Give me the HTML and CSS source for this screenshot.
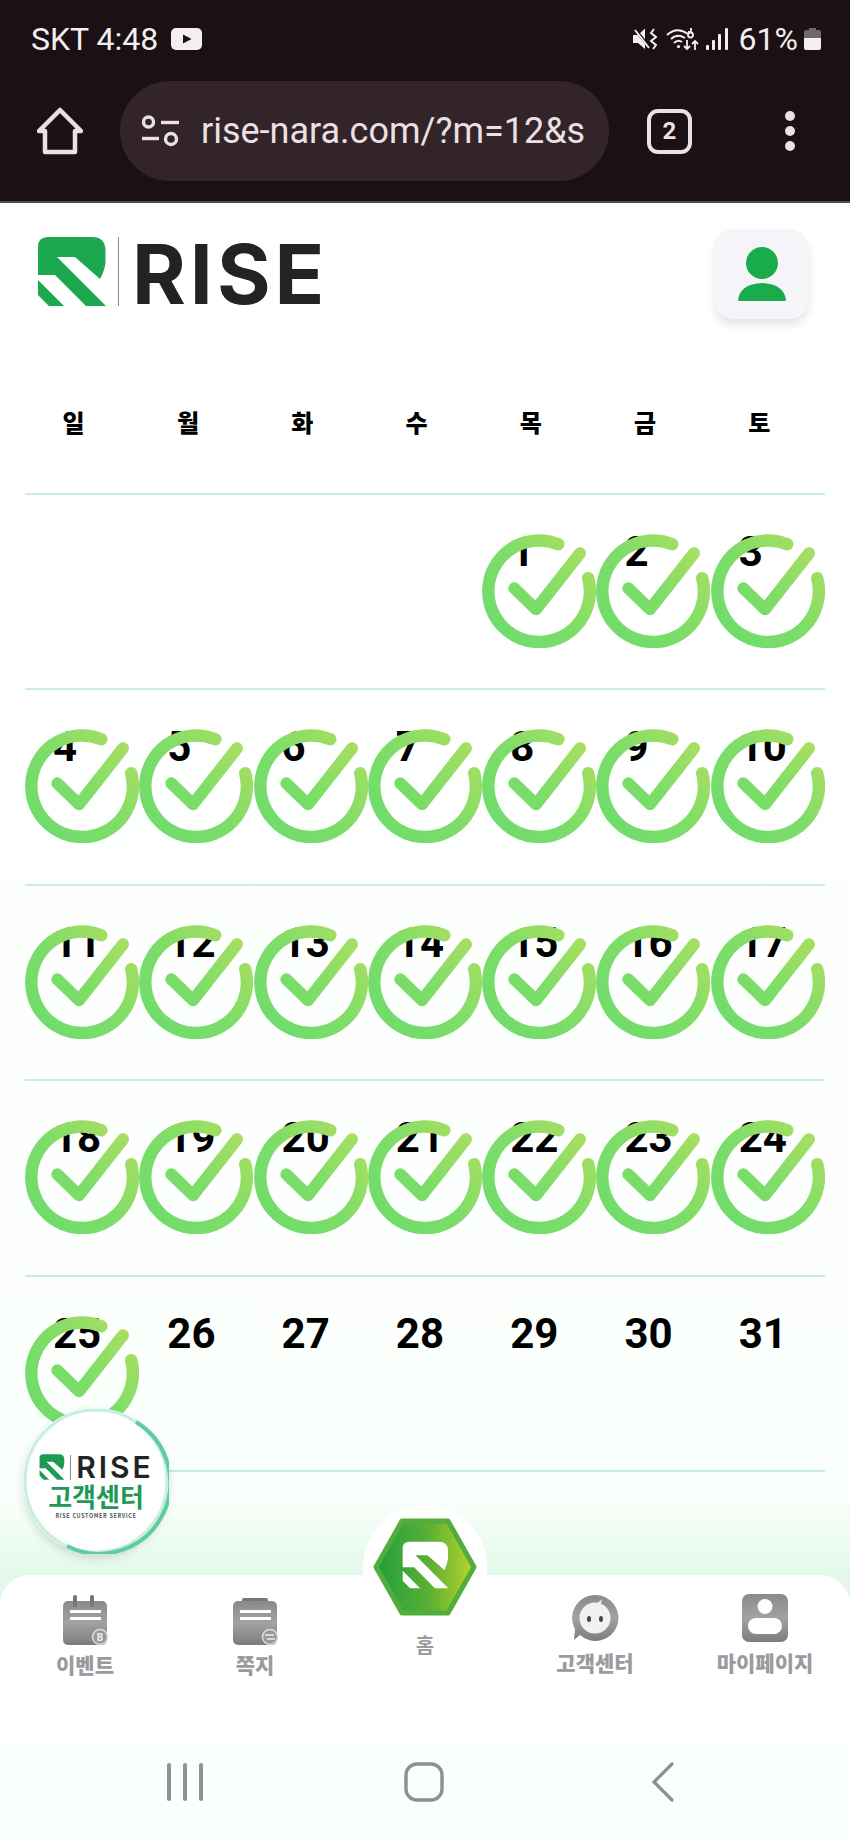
FILE: index.html
```html
<!DOCTYPE html>
<html lang="ko">
<head>
    <meta charset="UTF-8">
    <meta name="viewport" content="width=device-width, initial-scale=1.0">
    <title>RISE 출석체크</title>
    <link rel="stylesheet" href="styles.css">
</head>
<body>
    <!-- shared shapes -->
    <svg class="defs" width="0" height="0" aria-hidden="true">
        <defs>
            <linearGradient id="checkGrad" gradientUnits="userSpaceOnUse" x1="10" y1="100" x2="105" y2="15">
                <stop offset="0" stop-color="#6fdc6c"/>
                <stop offset="0.5" stop-color="#7edd68"/>
                <stop offset="1" stop-color="#aade62"/>
            </linearGradient>
            <linearGradient id="hexGrad" x1="0" y1="0" x2="1" y2="0">
                <stop offset="0" stop-color="#1f9f3e"/>
                <stop offset="0.55" stop-color="#5cb033"/>
                <stop offset="1" stop-color="#b9d62c"/>
            </linearGradient>
            <linearGradient id="grayGrad" x1="0" y1="0" x2="0" y2="1">
                <stop offset="0" stop-color="#8a8a8a"/>
                <stop offset="0.5" stop-color="#a2a2a2"/>
                <stop offset="1" stop-color="#7c7c7c"/>
            </linearGradient>
            <symbol id="check" viewBox="0 0 114 114">
                <path d="M76.3 10.2A50.8 50.8 0 1 0 106.2 44.2" fill="none" stroke="url(#checkGrad)" stroke-width="12.4" stroke-linecap="round"/>
                <path d="M32.3 54.3L54 75.3L98 19.3" fill="none" stroke="url(#checkGrad)" stroke-width="12" stroke-linecap="round" stroke-linejoin="round"/>
            </symbol>
            <symbol id="mark" viewBox="0 0 70 71">
                <path fill="currentColor" d="M11 1H55Q68 1 68.5 14V26Q68 34 63 43L38 21H20L69 70H49L18 39H1V11Q1 1 11 1ZM1 44L27 70H12L1 59Z"/>
            </symbol>
        </defs>
    </svg>

    <header class="browser-top">
        <div class="status-row">
            <div class="status-left">
                <span>SKT 4:48</span>
                <svg class="yt-icon" width="31" height="22" viewBox="0 0 31 22"><rect width="31" height="22" rx="5" fill="#f3eff0"/><path d="M12 6.5L20.5 11L12 15.5Z" fill="#1b1014"/></svg>
            </div>
            <div class="status-right">
                <svg width="25" height="24" viewBox="0 0 25 24">
                    <path d="M0 8H5L12 1.5V22L5 16H0Z" fill="#f3eff0"/>
                    <path d="M1 1L17 21" stroke="#1b1014" stroke-width="3"/>
                    <path d="M2 3L16 21" stroke="#f3eff0" stroke-width="2"/>
                    <path d="M21 2L18 6L23 10L18 14L23 18L20 22" fill="none" stroke="#f3eff0" stroke-width="2"/>
                </svg>
                <svg class="wifi-icon" width="34" height="24" viewBox="0 0 34 24">
                    <g fill="none" stroke="#f3eff0" stroke-width="1.8">
                        <path d="M1 8Q11 -1 22 7"/>
                        <path d="M5 12Q11 6 19 11"/>
                        <path d="M8 16Q12 12 16 15"/>
                        <path d="M22 5H25M25 5V1M22 8A2.5 2.5 0 1 0 27 8A2.5 2.5 0 1 0 22 8"/>
                        <path d="M21 13V22M18 19L21 22L24 19"/>
                        <path d="M29 23V14M26 17L29 14L32 17"/>
                    </g>
                    <circle cx="12.5" cy="19.5" r="1.6" fill="#f3eff0"/>
                </svg>
                <svg class="signal-icon" width="22" height="24" viewBox="0 0 22 24" fill="#f3eff0">
                    <rect x="0" y="18" width="3" height="5" rx="1"/>
                    <rect x="6" y="13" width="3" height="10" rx="1"/>
                    <rect x="12" y="7" width="3" height="16" rx="1"/>
                    <rect x="19" y="1" width="3" height="22" rx="1"/>
                </svg>
                <span class="battery-text">61%</span>
                <svg class="battery-icon" width="17" height="24" viewBox="0 0 17 24">
                    <path d="M5 1H12V3H15Q17 3 17 5V11H0V5Q0 3 2 3H5Z" fill="#6f676a"/>
                    <path d="M0 11H17V21Q17 23 15 23H2Q0 23 0 21Z" fill="#f3eff0"/>
                </svg>
            </div>
        </div>
        <div class="url-row">
            <svg class="home-icon" width="46" height="48" viewBox="0 0 46 48">
                <path d="M2 24L23 3L44 24H38V45H8V24Z" fill="none" stroke="#ebe0e3" stroke-width="4.5" stroke-linejoin="round"/>
            </svg>
            <div class="url-pill">
                <svg width="39" height="32" viewBox="0 0 39 32">
                    <g fill="none" stroke="#ebe0e3" stroke-width="3.4">
                        <circle cx="7.5" cy="7" r="5"/>
                        <path d="M20 7.5H38"/>
                        <path d="M1 23.5H18"/>
                        <circle cx="30" cy="24" r="5.5"/>
                    </g>
                </svg>
                <span class="url-text">rise-nara.com/?m=12&amp;s</span>
            </div>
            <span class="tab-count">2</span>
            <div class="menu-dots"><i></i><i></i><i></i></div>
        </div>
    </header>

    <div class="site-header">
        <div class="logo">
            <svg class="logo-mark" width="70" height="71"><use href="#mark"/></svg>
            <span class="logo-bar"></span>
            <span class="logo-text">RISE</span>
        </div>
        <div class="profile-btn">
            <svg width="50" height="56" viewBox="0 0 50 56" fill="#1aac4b">
                <circle cx="25" cy="17" r="16"/>
                <path d="M1 54Q3 38 25 37Q47 38 49 54Q49 55 47 55H3Q1 55 1 54Z"/>
            </svg>
        </div>
    </div>

    <main class="calendar">
        <div class="week week-head">
            <div class="day-name">일</div>
            <div class="day-name">월</div>
            <div class="day-name">화</div>
            <div class="day-name">수</div>
            <div class="day-name">목</div>
            <div class="day-name">금</div>
            <div class="day-name">토</div>
        </div>
        <div class="week">
            <div class="day"></div>
            <div class="day"></div>
            <div class="day"></div>
            <div class="day"></div>
            <div class="day"><span>1</span><svg class="check"><use href="#check"/></svg></div>
            <div class="day"><span>2</span><svg class="check"><use href="#check"/></svg></div>
            <div class="day"><span>3</span><svg class="check"><use href="#check"/></svg></div>
        </div>
        <div class="week">
            <div class="day"><span>4</span><svg class="check"><use href="#check"/></svg></div>
            <div class="day"><span>5</span><svg class="check"><use href="#check"/></svg></div>
            <div class="day"><span>6</span><svg class="check"><use href="#check"/></svg></div>
            <div class="day"><span>7</span><svg class="check"><use href="#check"/></svg></div>
            <div class="day"><span>8</span><svg class="check"><use href="#check"/></svg></div>
            <div class="day"><span>9</span><svg class="check"><use href="#check"/></svg></div>
            <div class="day"><span>10</span><svg class="check"><use href="#check"/></svg></div>
        </div>
        <div class="week">
            <div class="day"><span>11</span><svg class="check"><use href="#check"/></svg></div>
            <div class="day"><span>12</span><svg class="check"><use href="#check"/></svg></div>
            <div class="day"><span>13</span><svg class="check"><use href="#check"/></svg></div>
            <div class="day"><span>14</span><svg class="check"><use href="#check"/></svg></div>
            <div class="day"><span>15</span><svg class="check"><use href="#check"/></svg></div>
            <div class="day"><span>16</span><svg class="check"><use href="#check"/></svg></div>
            <div class="day"><span>17</span><svg class="check"><use href="#check"/></svg></div>
        </div>
        <div class="week">
            <div class="day"><span>18</span><svg class="check"><use href="#check"/></svg></div>
            <div class="day"><span>19</span><svg class="check"><use href="#check"/></svg></div>
            <div class="day"><span>20</span><svg class="check"><use href="#check"/></svg></div>
            <div class="day"><span>21</span><svg class="check"><use href="#check"/></svg></div>
            <div class="day"><span>22</span><svg class="check"><use href="#check"/></svg></div>
            <div class="day"><span>23</span><svg class="check"><use href="#check"/></svg></div>
            <div class="day"><span>24</span><svg class="check"><use href="#check"/></svg></div>
        </div>
        <div class="week">
            <div class="day"><span>25</span><svg class="check"><use href="#check"/></svg></div>
            <div class="day"><span>26</span></div>
            <div class="day"><span>27</span></div>
            <div class="day"><span>28</span></div>
            <div class="day"><span>29</span></div>
            <div class="day"><span>30</span></div>
            <div class="day"><span>31</span></div>
        </div>
    </main>

    <div class="page-fade"></div>

    <!-- floating customer center button -->
    <div class="cs-badge">
        <svg class="cs-ring" width="146" height="146" viewBox="0 0 146 146">
            <circle cx="73" cy="73" r="71" fill="none" stroke="#c8eee0" stroke-width="3"/>
            <path d="M113 14A71 71 0 0 1 44 138" fill="none" stroke="#5fcba2" stroke-width="4"/>
        </svg>
        <div class="cs-logo">
            <svg width="28" height="26"><use href="#mark"/></svg>
            <span class="cs-bar"></span>
            <span class="cs-rise">RISE</span>
        </div>
        <div class="cs-title">고객센터</div>
        <div class="cs-sub">RISE CUSTOMER SERVICE</div>
    </div>

    <nav class="tabbar">
        <a class="tab tab-low">
            <svg width="48" height="54" viewBox="0 0 48 54">
                <rect x="2" y="7" width="44" height="44" rx="5" fill="url(#grayGrad)"/>
                <rect x="12" y="1" width="4" height="12" rx="2" fill="#777"/>
                <rect x="29" y="1" width="4" height="12" rx="2" fill="#777"/>
                <rect x="9" y="16" width="31" height="3" fill="#fff"/>
                <rect x="9" y="23" width="31" height="3" fill="#fff"/>
                <circle cx="39" cy="43" r="7.5" fill="#999" stroke="#ddd" stroke-width="1.5"/>
                <text x="39" y="46.5" class="coin-text">B</text>
            </svg>
            <span>이벤트</span>
        </a>
        <a class="tab tab-low">
            <svg width="48" height="54" viewBox="0 0 48 54">
                <rect x="11" y="4" width="26" height="6" rx="2" fill="#777"/>
                <rect x="2" y="7" width="44" height="44" rx="5" fill="url(#grayGrad)"/>
                <rect x="9" y="16" width="31" height="3" fill="#fff"/>
                <rect x="9" y="23" width="31" height="3" fill="#fff"/>
                <circle cx="39" cy="43" r="7.5" fill="#999" stroke="#ddd" stroke-width="1.5"/>
                <path d="M34 41H43M36 45H44" stroke="#eee" stroke-width="1.4"/>
            </svg>
            <span>쪽지</span>
        </a>
        <a class="tab tab-home">
            <span class="home-disc">
                <svg width="106" height="100" viewBox="0 0 106 100">
                    <path d="M30 4H76L102 50L76 96H30L4 50Z" fill="url(#hexGrad)" stroke="#52ad3c" stroke-width="5" stroke-linejoin="round"/>
                    <use href="#mark" x="30" y="23" width="47" height="50" color="#fff"/>
                </svg>
            </span>
            <span>홈</span>
        </a>
        <a class="tab">
            <svg width="48" height="54" viewBox="0 0 48 54">
                <path d="M24 1A23 23 0 1 1 9 41L3 46L4 35A23 23 0 0 1 24 1Z" fill="url(#grayGrad)"/>
                <circle cx="24" cy="24" r="15.5" fill="#f1f1f1"/>
                <path d="M24 11Q29 7 31 5Q30 9 30 12Z" fill="#f1f1f1"/>
                <ellipse cx="18" cy="25" rx="2" ry="3" fill="#444"/>
                <ellipse cx="30" cy="25" rx="2" ry="3" fill="#444"/>
            </svg>
            <span>고객센터</span>
        </a>
        <a class="tab">
            <svg width="48" height="54" viewBox="0 0 48 54">
                <rect x="1" y="0" width="46" height="48" rx="7" fill="url(#grayGrad)"/>
                <circle cx="24" cy="12.5" r="7.5" fill="#fff"/>
                <rect x="7" y="24" width="34" height="16" rx="8" fill="#fff"/>
            </svg>
            <span>마이페이지</span>
        </a>
    </nav>

    <div class="system-nav">
        <svg class="sys-recent" width="36" height="40" viewBox="0 0 36 40" fill="#8f8f93">
            <rect x="0" y="1" width="4" height="38" rx="2"/>
            <rect x="16" y="1" width="4" height="38" rx="2"/>
            <rect x="32" y="1" width="4" height="38" rx="2"/>
        </svg>
        <svg class="sys-home" width="40" height="40" viewBox="0 0 40 40">
            <rect x="2" y="2" width="36" height="36" rx="11" fill="none" stroke="#8f8f93" stroke-width="3.4"/>
        </svg>
        <svg class="sys-back" width="22" height="40" viewBox="0 0 22 40">
            <path d="M20 2L2 20L20 38" fill="none" stroke="#8f8f93" stroke-width="3.2" stroke-linecap="round"/>
        </svg>
    </div>
</body>
</html>
```

FILE: styles.css
```css
* {
    box-sizing: border-box;
}
html, body {
    margin: 0;
    padding: 0;
}
body {
    position: relative;
    width: 850px;
    height: 1842px;
    overflow: hidden;
    background: linear-gradient(#ffffff 20%, #fbfffc 80%);
    font-family: "Noto Sans CJK KR", "Noto Sans", sans-serif;
}
.defs {
    position: absolute;
}

/* browser chrome */
.browser-top {
    height: 203px;
    background-color: #1b1014;
    border-bottom: 2px solid #55494d;
    color: #f3eff0;
    font-family: Roboto, sans-serif;
}
.status-row {
    height: 81px;
    padding: 0 29px 3px 31px;
    display: flex;
    justify-content: space-between;
    align-items: center;
    font-size: 32px;
}
.status-left, .status-right {
    display: flex;
    align-items: center;
}
.yt-icon {
    margin-left: 13px;
}
.wifi-icon {
    margin-left: 8px;
}
.signal-icon {
    margin-left: 6px;
}
.battery-text {
    margin-left: 11px;
}
.battery-icon {
    margin-left: 6px;
}
.url-row {
    height: 100px;
    padding-left: 37px;
    display: flex;
    align-items: center;
}
.url-pill {
    width: 489px;
    height: 100px;
    margin-left: 37px;
    padding-left: 21px;
    border-radius: 50px;
    background-color: #33242a;
    display: flex;
    align-items: center;
    gap: 21px;
}
.url-text {
    font-size: 36px;
    color: #ebe0e3;
    white-space: nowrap;
}
.tab-count {
    width: 45px;
    height: 45px;
    margin-left: 38px;
    border: 4.5px solid #ebe0e3;
    border-radius: 11px;
    display: flex;
    justify-content: center;
    align-items: center;
    font-size: 24px;
    font-weight: 700;
    color: #ebe0e3;
}
.menu-dots {
    margin-left: 93px;
    display: flex;
    flex-direction: column;
    gap: 5px;
}
.menu-dots i {
    display: block;
    width: 10px;
    height: 10px;
    border-radius: 50%;
    background-color: #ebe0e3;
}

/* site header */
.site-header {
    height: 146px;
    padding: 26px 41px 0 37px;
    display: flex;
    justify-content: space-between;
    align-items: flex-start;
}
.logo {
    margin-top: 7px;
    display: flex;
    align-items: flex-start;
    color: #1ca84f;
}
.logo-bar {
    width: 1px;
    height: 69px;
    margin: 1px 0 0 11px;
    background-color: #8a8a8a;
}
.logo-text {
    margin: 3px 0 0 13px;
    font-family: Inter, sans-serif;
    font-size: 82px;
    font-weight: 700;
    line-height: 71px;
    letter-spacing: 4px;
    color: #232323;
}
.profile-btn {
    width: 95px;
    height: 90px;
    border-radius: 20px;
    background-color: #f5f4f8;
    box-shadow: 0 6px 8px rgba(0, 0, 0, 0.1);
    display: flex;
    justify-content: center;
    align-items: center;
}

/* calendar */
.calendar {
    margin: 0 25px;
}
.week {
    height: 195.4px;
    display: grid;
    grid-template-columns: repeat(7, 1fr);
    border-bottom: 2px solid #c6efdc;
}
.week-head {
    height: 146px;
}
.day-name {
    padding-right: 17px;
    display: flex;
    justify-content: center;
    align-items: center;
    font-size: 24px;
    font-weight: 900;
    color: #000;
}
.day {
    position: relative;
    padding: 36px 0 0 28px;
    font-family: Roboto, sans-serif;
    font-size: 42px;
    font-weight: 700;
    line-height: 1;
    color: #000;
}
.check {
    position: absolute;
    top: 39px;
    left: 0;
    width: 114px;
    height: 114px;
}
.page-fade {
    height: 133px;
    background: linear-gradient(rgba(226, 249, 233, 0) 18%, #e2f9e9 76%);
}

/* floating customer center */
.cs-badge {
    position: absolute;
    left: 23px;
    top: 1408px;
    width: 146px;
    height: 146px;
    padding-top: 46px;
    border-radius: 50%;
    background: radial-gradient(circle, #ffffff 62%, #e2f7ee 100%);
    box-shadow: 0 4px 10px rgba(0, 0, 0, 0.14);
    display: flex;
    flex-direction: column;
    align-items: center;
}
.cs-ring {
    position: absolute;
    top: 0;
    left: 0;
}
.cs-logo {
    height: 26px;
    display: flex;
    align-items: center;
    color: #1f9a55;
}
.cs-bar {
    width: 1px;
    height: 25px;
    margin-left: 4px;
    background-color: #888;
}
.cs-rise {
    margin-left: 5px;
    font-family: Inter, sans-serif;
    font-size: 30px;
    font-weight: 600;
    line-height: 26px;
    letter-spacing: 3px;
    color: #232323;
}
.cs-title {
    margin-top: 1px;
    font-size: 26px;
    font-weight: 700;
    line-height: 30px;
    color: #1f9a55;
}
.cs-sub {
    font-size: 5.5px;
    font-weight: 700;
    line-height: 10px;
    letter-spacing: 0.6px;
    color: #555;
    white-space: nowrap;
}

/* bottom tabs */
.tabbar {
    position: relative;
    height: 167px;
    margin-top: -30px;
    padding-top: 19px;
    border-radius: 30px 30px 0 0;
    background-color: #fff;
    display: grid;
    grid-template-columns: repeat(5, 170px);
}
.tab {
    display: flex;
    flex-direction: column;
    align-items: center;
    font-size: 21px;
    font-weight: 900;
    line-height: 24px;
    color: #9a9a9f;
}
.tab svg {
    display: block;
}
.tab > span:last-child {
    margin-top: 2px;
}
.tab-low > span:last-child {
    margin-top: 4px;
}
.tab-home > span:last-child {
    margin-top: 4px;
    font-size: 20px;
    font-weight: 700;
}
.home-disc {
    width: 124px;
    height: 124px;
    margin-top: -89px;
    border-radius: 50%;
    background-color: #fff;
    display: flex;
    justify-content: center;
    align-items: center;
}
.coin-text {
    font-family: Roboto, sans-serif;
    font-size: 10px;
    font-weight: 700;
    text-anchor: middle;
    fill: #eee;
}

/* android navigation */
.system-nav {
    height: 100px;
    padding: 20px 0 0 167px;
    display: flex;
    align-items: flex-start;
}
.sys-home {
    margin-left: 201px;
}
.sys-back {
    margin-left: 208px;
}
```
